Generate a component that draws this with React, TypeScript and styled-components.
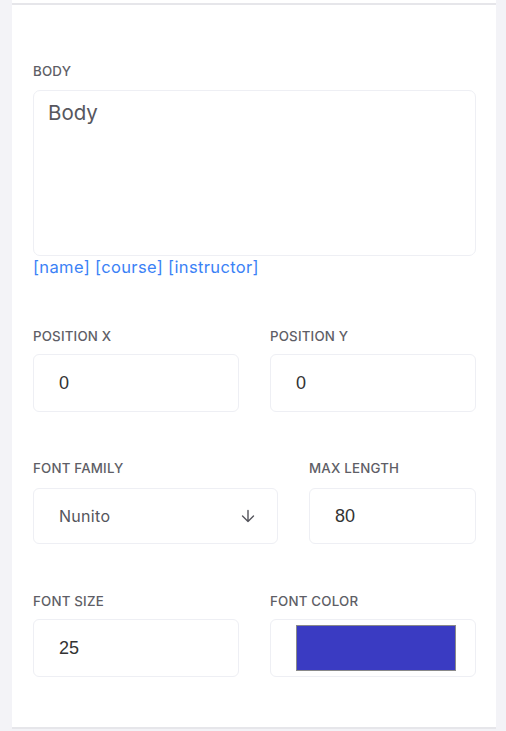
import React from "react";
import styled, { createGlobalStyle } from "styled-components";

const Global = createGlobalStyle`
  html, body { margin: 0; padding: 0; background: #f3f3f7; }
  body { font-family: Inter, "Noto Sans", sans-serif; }
  * { box-sizing: border-box; }
`;

const Page = styled.div`
  min-height: 731px;
  padding: 0 10px 0 12px;
`;

const Panel = styled.div`
  background: #ffffff;
  padding-top: 3px;
  height: 729px;
  display: flex;
  flex-direction: column;
`;

const Rule = styled.div`
  height: 2px;
  background: #e6e6ea;
  flex-shrink: 0;
`;

const Content = styled.div`
  flex: 1;
  padding: 58px 20px 0 21px;
  display: flex;
  flex-direction: column;
`;

const Section = styled.div<{ $mb: number }>`
  display: flex;
  flex-direction: column;
  margin-bottom: ${(p) => p.$mb}px;
`;

const Row = styled.div<{ $cols: string; $mb: number }>`
  display: grid;
  grid-template-columns: ${(p) => p.$cols};
  column-gap: 31px;
  margin-bottom: ${(p) => p.$mb}px;
`;

const Field = styled.div`
  display: flex;
  flex-direction: column;
`;

const Label = styled.div<{ $mb?: number }>`
  font-size: 13.3px;
  line-height: 16px;
  font-weight: 500;
  color: #5e5e66;
  letter-spacing: 0.2px;
  text-transform: uppercase;
  margin-bottom: ${(p) => p.$mb ?? 10}px;
`;

const Box = styled.div<{ $h: number }>`
  height: ${(p) => p.$h}px;
  border: 1px solid #eeeff4;
  border-radius: 6px;
  background: #fff;
  display: flex;
  align-items: center;
  padding: 0 0 0 25px;
`;

const TextArea = styled.div`
  height: 166px;
  border: 1px solid #eeeff4;
  border-radius: 7px;
  padding: 9px 14px;
  font-size: 20.5px;
  line-height: 26px;
  color: #57575e;
`;

const Tokens = styled.div`
  margin-top: 1px;
  font-size: 16.5px;
  line-height: 20px;
  letter-spacing: 0.35px;
  color: #3b82f6;
`;

const Value = styled.span`
  font-family: "Liberation Sans", Arial, sans-serif;
  font-size: 18px;
  color: #333;
`;

const SelectText = styled.span`
  flex: 1;
  font-size: 16px;
  letter-spacing: 0.3px;
  color: #55555c;
`;

const ArrowWrap = styled.span`
  width: 16px;
  margin-right: 21px;
  display: flex;
  align-items: center;
  justify-content: center;
`;

const ColorBox = styled.div<{ $h: number }>`
  height: ${(p) => p.$h}px;
  border: 1px solid #eeeff4;
  border-radius: 6px;
  display: flex;
  align-items: center;
  padding: 0 19px 0 25px;
`;

const Swatch = styled.div<{ $color: string }>`
  flex: 1;
  height: 46px;
  background: ${(p) => p.$color};
  border: 1px solid #8a8a8a;
`;

const Spacer = styled.div`
  flex: 1;
`;

export default function App() {
  return (
    <>
      <Global />
      <Page>
        <Panel>
          <Rule />
          <Content>
            <Section $mb={51}>
              <Label $mb={11}>Body</Label>
              <TextArea>Body</TextArea>
              <Tokens>[name] [course] [instructor]</Tokens>
            </Section>
            <Row $cols="1fr 1fr" $mb={48}>
              <Field>
                <Label>Position X</Label>
                <Box $h={58}>
                  <Value>0</Value>
                </Box>
              </Field>
              <Field>
                <Label>Position Y</Label>
                <Box $h={58}>
                  <Value>0</Value>
                </Box>
              </Field>
            </Row>
            <Row $cols="245px 1fr" $mb={49}>
              <Field>
                <Label $mb={12}>Font Family</Label>
                <Box $h={56}>
                  <SelectText>Nunito</SelectText>
                  <ArrowWrap>
                    <svg width="16" height="14" viewBox="0 0 16 14" fill="none">
                      <path
                        d="M8 1.5V12.5M2.5 7L8 12.5L13.5 7"
                        stroke="#55555c"
                        strokeWidth="1.4"
                        strokeLinecap="round"
                        strokeLinejoin="round"
                      />
                    </svg>
                  </ArrowWrap>
                </Box>
              </Field>
              <Field>
                <Label $mb={12}>Max Length</Label>
                <Box $h={56}>
                  <Value>80</Value>
                </Box>
              </Field>
            </Row>
            <Row $cols="1fr 1fr" $mb={0}>
              <Field>
                <Label>Font Size</Label>
                <Box $h={58}>
                  <Value>25</Value>
                </Box>
              </Field>
              <Field>
                <Label>Font Color</Label>
                <ColorBox $h={58}>
                  <Swatch $color="#3a3bc2" />
                </ColorBox>
              </Field>
            </Row>
            <Spacer />
          </Content>
          <Rule />
        </Panel>
      </Page>
    </>
  );
}
